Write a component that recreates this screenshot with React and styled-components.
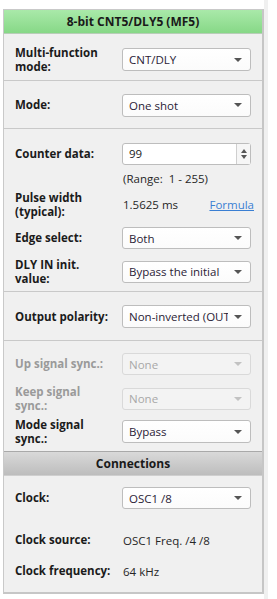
import React from "react";
import styled, { createGlobalStyle, css } from "styled-components";

const Global = createGlobalStyle`
  html, body { margin: 0; padding: 0; background: #fff; }
  body { font-family: "Open Sans", "Noto Sans", sans-serif; font-size: 11.5px; color: #1b1b1b; }
`;

const Page = styled.div`
  display: flex;
  align-items: stretch;
  padding: 9px 0 0 3px;
  width: 277px;
  height: 599px;
  box-sizing: border-box;
`;

const Panel = styled.div`
  width: 261px;
  box-sizing: border-box;
  background: #f0f0f0;
  border-left: 1px solid #c9c9c9;
  border-right: 2px solid #c6c6c6;
  border-bottom: 2px solid #c6c6c6;
  border-top: 1px solid #c9c9c9;
  align-self: flex-start;
  display: flex;
  flex-direction: column;
`;

const Gutter = styled.div`
  width: 4px;
  background: #f0f0f0;
  margin-top: -9px;
`;

const Header = styled.div`
  height: 23px;
  display: flex;
  align-items: center;
  justify-content: center;
  font-weight: 700;
  font-size: 12px;
  color: #1a1a1a;
  background: ${(p) =>
    p.$variant === "green"
      ? "linear-gradient(#a9e9a9, #87d887)"
      : "linear-gradient(#d9d9d9, #bdbdbd)"};
  border-top: ${(p) => (p.$variant === "green" ? "none" : "1px solid #a9a9a9")};
  border-bottom: 1px solid ${(p) => (p.$variant === "green" ? "#b8cdb8" : "#cfcfcf")};
`;

const Section = styled.div`
  display: flex;
  flex-direction: column;
  padding: ${(p) => p.$pt}px 0 ${(p) => p.$pb}px 11px;
  border-bottom: ${(p) => (p.$last ? "none" : "1px solid #c9c9c9")};
`;

const Row = styled.div`
  display: grid;
  grid-template-columns: 107px 129px;
  align-items: center;
  height: ${(p) => p.$h}px;
  margin-top: ${(p) => p.$mt || 0}px;
`;

const Label = styled.div`
  font-weight: 700;
  line-height: 13.5px;
  color: ${(p) => (p.$disabled ? "#9a9a9a" : "#1b1b1b")};
`;

const Value = styled.div`
  color: #262626;
  padding-left: 1px;
  display: flex;
  justify-content: space-between;
  align-items: center;
`;

const Link = styled.span`
  color: #3a7fd3;
  text-decoration: underline;
  margin-right: -3px;
`;

const SelectBox = styled.div`
  height: ${(p) => p.$h || 22}px;
  box-sizing: border-box;
  border: 1px solid ${(p) => (p.$disabled ? "#d9d9d9" : "#bdbdbd")};
  border-radius: 3px;
  background: ${(p) => (p.$disabled ? "#f3f3f3" : "linear-gradient(#ffffff, #fbfbfb)")};
  display: flex;
  align-items: center;
  padding: 0 8px 0 6px;
  color: ${(p) => (p.$disabled ? "#a8a8a8" : "#2a2236")};
  white-space: nowrap;
  overflow: hidden;
`;

const SelectText = styled.span`
  flex: 1;
  overflow: hidden;
`;

const Arrow = styled.span`
  width: 0;
  height: 0;
  margin-left: 6px;
  border-left: 4px solid transparent;
  border-right: 4px solid transparent;
  border-top: 4px solid ${(p) => (p.$disabled ? "#c2c2c2" : "#555")};
  flex: none;
`;

const Spin = styled.div`
  height: 22px;
  box-sizing: border-box;
  border: 1px solid #bdbdbd;
  border-radius: 3px;
  background: #fff;
  display: flex;
  align-items: stretch;
  color: #222;
`;

const SpinText = styled.span`
  flex: 1;
  padding-left: 6px;
  display: flex;
  align-items: center;
`;

const SpinBtns = styled.div`
  width: 13px;
  border-left: 1px solid #cfcfcf;
  background: #f6f6f6;
  display: flex;
  flex-direction: column;
  align-items: center;
  justify-content: center;
  gap: 2px;
`;

const Tri = styled.span`
  width: 0;
  height: 0;
  border-left: 3.5px solid transparent;
  border-right: 3.5px solid transparent;
  ${(p) =>
    p.$up
      ? css`border-bottom: 4px solid #555;`
      : css`border-top: 4px solid #555;`}
`;

function Select({ value, disabled, h }) {
  return (
    <SelectBox $disabled={disabled} $h={h}>
      <SelectText>{value}</SelectText>
      <Arrow $disabled={disabled} />
    </SelectBox>
  );
}

export default function App() {
  return (
    <>
      <Global />
      <Page>
        <Panel>
          <Header $variant="green">8-bit CNT5/DLY5 (MF5)</Header>
          <Section $pt={12} $pb={8}>
            <Row $h={26}>
              <Label>Multi-function<br />mode:</Label>
              <Select value="CNT/DLY" h={23} />
            </Row>
          </Section>
          <Section $pt={12} $pb={11}>
            <Row $h={24}>
              <Label>Mode:</Label>
              <Select value="One shot" h={23} />
            </Row>
          </Section>
          <Section $pt={13} $pb={10}>
            <Row $h={23}>
              <Label>Counter data:</Label>
              <Spin>
                <SpinText>99</SpinText>
                <SpinBtns>
                  <Tri $up />
                  <Tri />
                </SpinBtns>
              </Spin>
            </Row>
            <Row $h={26}>
              <span />
              <Value>(Range:&nbsp; 1 - 255)</Value>
            </Row>
            <Row $h={26}>
              <Label>Pulse width<br />(typical):</Label>
              <Value>
                <span>1.5625 ms</span>
                <Link>Formula</Link>
              </Value>
            </Row>
            <Row $h={22} $mt={10}>
              <Label>Edge select:</Label>
              <Select value="Both" />
            </Row>
            <Row $h={23} $mt={9}>
              <Label>DLY IN init.<br />value:</Label>
              <Select value="Bypass the initial" />
            </Row>
          </Section>
          <Section $pt={13} $pb={12}>
            <Row $h={23}>
              <Label>Output polarity:</Label>
              <Select value="Non-inverted (OUT)" h={23} />
            </Row>
          </Section>
          <Section $pt={12} $pb={10} $last>
            <Row $h={22}>
              <Label $disabled>Up signal sync.:</Label>
              <Select value="None" disabled />
            </Row>
            <Row $h={24} $mt={10}>
              <Label $disabled>Keep signal<br />sync.:</Label>
              <Select value="None" disabled />
            </Row>
            <Row $h={23} $mt={9}>
              <Label>Mode signal<br />sync.:</Label>
              <Select value="Bypass" h={23} />
            </Row>
          </Section>
          <Header>Connections</Header>
          <Section $pt={11} $pb={10} $last>
            <Row $h={22}>
              <Label>Clock:</Label>
              <Select value="OSC1 /8" />
            </Row>
            <Row $h={22} $mt={20}>
              <Label>Clock source:</Label>
              <Value>OSC1 Freq. /4 /8</Value>
            </Row>
            <Row $h={22} $mt={9}>
              <Label>Clock frequency:</Label>
              <Value>64 kHz</Value>
            </Row>
          </Section>
        </Panel>
        <Gutter />
      </Page>
    </>
  );
}
